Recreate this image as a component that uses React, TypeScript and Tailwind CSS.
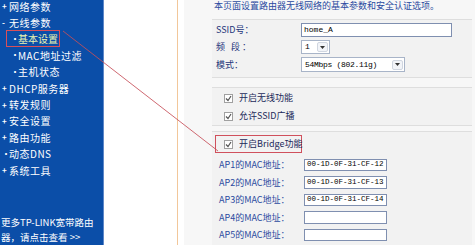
import React from "react";

const navItems: { mark: string; text: string; sub?: boolean; active?: boolean }[] = [
  { mark: "+", text: "网络参数" },
  { mark: "-", text: "无线参数" },
  { mark: "•", text: "基本设置", sub: true, active: true },
  { mark: "•", text: "MAC地址过滤", sub: true },
  { mark: "•", text: "主机状态", sub: true },
  { mark: "+", text: "DHCP服务器" },
  { mark: "+", text: "转发规则" },
  { mark: "+", text: "安全设置" },
  { mark: "+", text: "路由功能" },
  { mark: "•", text: "动态DNS" },
  { mark: "+", text: "系统工具" },
];

const macs = ["00-1D-0F-31-CF-12", "00-1D-0F-31-CF-13", "00-1D-0F-31-CF-14", "", ""];

const font = { fontFamily: '"Noto Sans CJK SC", "Noto Sans", sans-serif' };
const mono = { fontFamily: '"Liberation Mono", monospace' };

const Check: React.FC = () => (
  <span className="w-[9px] h-[9px] border border-[#a0a0a0] bg-white flex items-center justify-center shrink-0">
    <svg width="7" height="7" viewBox="0 0 7 7">
      <path d="M1 3.5 L3 5.5 L6 1" stroke="#555" strokeWidth="1.2" fill="none" />
    </svg>
  </span>
);

const Arrow: React.FC = () => (
  <span className="ml-auto w-[11px] h-[10px] rounded-[2px] border border-[#d0d6e0] bg-[#f2f4f8] flex items-center justify-center">
    <svg width="5" height="3" viewBox="0 0 5 3">
      <path d="M0 0 L5 0 L2.5 3 Z" fill="#333" />
    </svg>
  </span>
);

const App: React.FC = () => {
  return (
    <div className="relative w-[475px] h-[245px] overflow-hidden bg-white flex" style={font}>
      <div className="w-[104px] h-full bg-[#0b4ea8] border-r border-[#5f88c8] text-white text-[10px] flex flex-col">
        <div className="-mt-[2px] flex flex-col">
          {navItems.map((item) =>
            item.active ? (
              <div key={item.text} className="h-[16.4px] flex items-center pl-[6px]">
                <span className="h-[17px] border-[1.5px] border-[#d8505a] flex items-center pl-[4px] pr-[1px]">
                  <span className="w-[7px] text-[8px] font-bold">{item.mark}</span>
                  <span className="text-[#eaf5b0]">{item.text}</span>
                </span>
              </div>
            ) : (
              <div key={item.text} className={`h-[16.4px] flex items-center ${item.sub ? "pl-[11px]" : "pl-[2px]"}`}>
                <span className="w-[7px] text-[8px] font-bold">{item.mark}</span>
                <span className="tracking-[0.5px]">{item.text}</span>
              </div>
            )
          )}
        </div>
        <div className="mt-[37px] leading-[15px] text-[9.5px] pl-[1px]">
          <div>更多TP-LINK宽带路由</div>
          <div>器，请点击查看 &gt;&gt;</div>
        </div>
      </div>

      <div className="w-[74px] h-full border-r border-[#f2c79a]" />
      <div className="w-[6px] h-full bg-white" />

      <div className="flex-1 h-full bg-[#f7f7f7] text-[9px] flex flex-col">
        <div className="h-[19px] pl-[30px] text-[#2a4aa0] leading-[12px]">
          本页面设置路由器无线网络的基本参数和安全认证选项。
        </div>

        <div className="ml-[28px] mr-[3px] h-[59px] border-y border-[#dedede] bg-[#f2f2f2] pt-[3px] pl-[4px] flex flex-col gap-[3px] text-[#23357a]">
          <div className="h-[14px] flex items-center">
            <span className="w-[85px]">SSID号：</span>
            <span className="w-[151px] h-[14px] border border-[#7f8fb0] bg-white flex items-center pl-[2px] text-[8px] text-black" style={mono}>
              home_A
            </span>
          </div>
          <div className="h-[14px] flex items-center">
            <span className="w-[85px] tracking-[2px]">频 段：</span>
            <span className="w-[29px] h-[14px] border border-[#a8b4c8] bg-white flex items-center pl-[3px] pr-[1px] text-[8px] text-black" style={mono}>
              1
              <Arrow />
            </span>
          </div>
          <div className="h-[15px] flex items-center">
            <span className="w-[85px]">模式：</span>
            <span className="w-[104px] h-[15px] border border-[#a8b4c8] bg-white flex items-center pl-[3px] pr-[1px] text-[8px] tracking-[-0.3px] text-black" style={mono}>
              54Mbps (802.11g)
              <Arrow />
            </span>
          </div>
        </div>

        <div className="mt-[9px] ml-[28px] mr-[3px] h-[39px] border-y border-[#dedede] bg-[#f2f2f2] pt-[1px] pl-[12px] flex flex-col text-[#1d2a5a]">
          <div className="h-[18px] flex items-center gap-[6px]">
            <Check />
            <span>开启无线功能</span>
          </div>
          <div className="h-[18px] flex items-center gap-[6px]">
            <Check />
            <span>允许SSID广播</span>
          </div>
        </div>

        <div className="mt-[5px] ml-[28px] mr-[3px] flex-1 border-t border-[#dedede] bg-[#f2f2f2] pt-[3px] flex flex-col">
          <div className="ml-[3px] w-[87px] h-[18px] border-[1.5px] border-[#d0505c] flex items-center gap-[6px] pl-[8px] text-[#1d2a5a] whitespace-nowrap">
            <Check />
            <span>开启Bridge功能</span>
          </div>
          <div className="flex flex-col pl-[7px] pt-[3px] text-[#2a4aa0]">
            {macs.map((m, i) => (
              <div key={i} className="h-[17.5px] flex items-center">
                <span className="w-[85px]">AP{i + 1}的MAC地址：</span>
                <span
                  className="w-[83px] h-[12.5px] border border-[#7f8fb0] bg-white flex items-center pl-[2px] text-[7.5px] text-black"
                  style={mono}
                >
                  {m}
                </span>
              </div>
            ))}
          </div>
        </div>
      </div>

      <svg className="absolute inset-0 pointer-events-none" width="475" height="245">
        <line x1="63" y1="31" x2="218" y2="151" stroke="#c8505a" strokeWidth="1" opacity="0.85" />
      </svg>
    </div>
  );
};

export default App;
